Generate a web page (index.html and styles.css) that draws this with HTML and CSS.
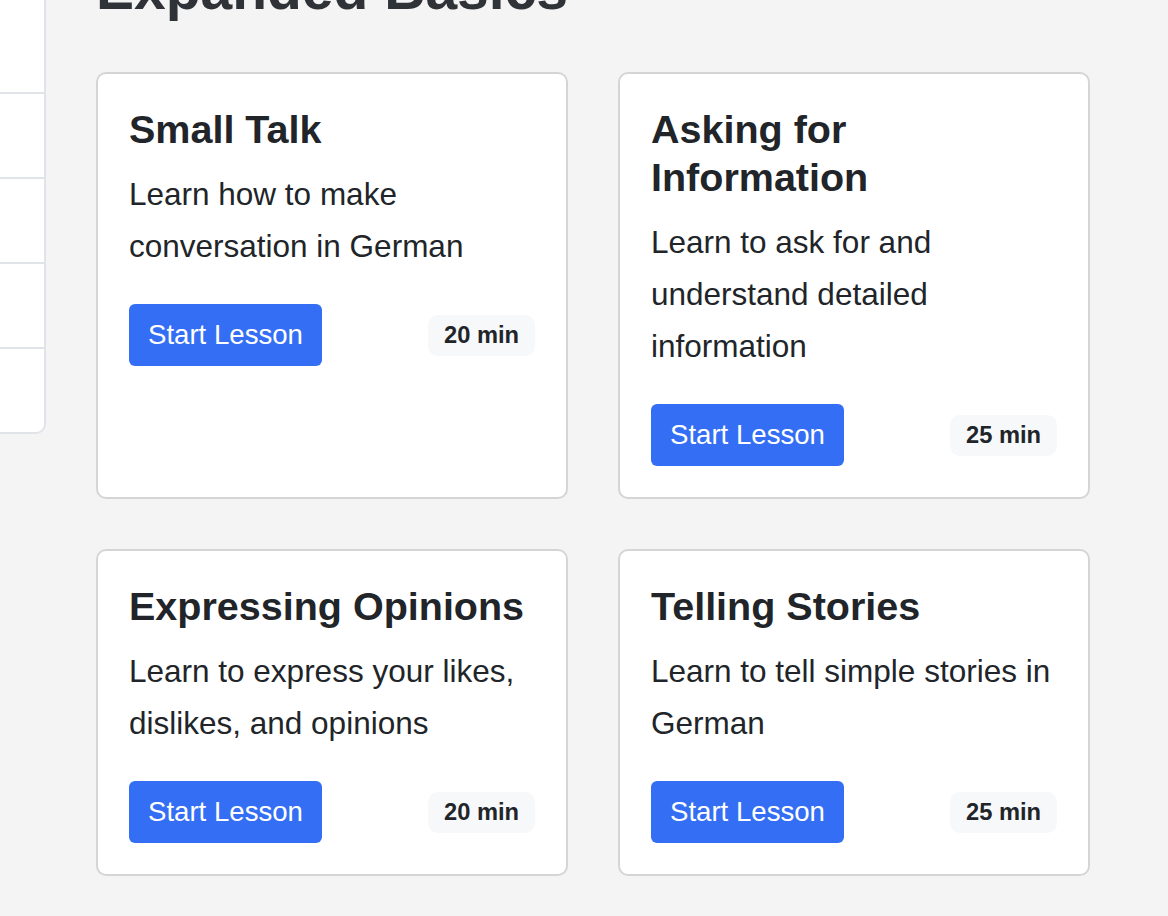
FILE: index.html
```html
<!DOCTYPE html>
<html lang="en">
<head>
<meta charset="utf-8">
<title>Expanded Basics</title>
<link rel="stylesheet" href="styles.css">
</head>
<body>
<div class="layout">
  <aside class="sidebar">
    <div class="side-row side-row-first"></div>
    <div class="side-row"></div>
    <div class="side-row"></div>
    <div class="side-row"></div>
    <div class="side-row side-row-last"></div>
  </aside>
  <main class="main">
    <h1 class="section-title">Expanded Basics</h1>
    <div class="grid">
      <div class="card">
        <h2 class="card-title">Small Talk</h2>
        <p class="card-desc">Learn how to make conversation in German</p>
        <div class="card-footer">
          <button class="btn">Start Lesson</button>
          <span class="badge">20 min</span>
        </div>
      </div>
      <div class="card">
        <h2 class="card-title">Asking for Information</h2>
        <p class="card-desc">Learn to ask for and understand detailed information</p>
        <div class="card-footer">
          <button class="btn">Start Lesson</button>
          <span class="badge">25 min</span>
        </div>
      </div>
      <div class="card">
        <h2 class="card-title">Expressing Opinions</h2>
        <p class="card-desc">Learn to express your likes, dislikes, and opinions</p>
        <div class="card-footer">
          <button class="btn">Start Lesson</button>
          <span class="badge">20 min</span>
        </div>
      </div>
      <div class="card">
        <h2 class="card-title">Telling Stories</h2>
        <p class="card-desc">Learn to tell simple stories in German</p>
        <div class="card-footer">
          <button class="btn">Start Lesson</button>
          <span class="badge">25 min</span>
        </div>
      </div>
    </div>
  </main>
</div>
</body>
</html>
```

FILE: styles.css
```css
html, body {
  margin: 0;
  padding: 0;
}

body {
  background: #f4f4f4;
  font-family: "Liberation Sans", Arial, Helvetica, sans-serif;
  color: #212529;
  overflow: hidden;
  height: 916px;
}

.layout {
  display: flex;
  align-items: flex-start;
  margin-top: -45px;
}

.sidebar {
  width: 44px;
  flex: 0 0 44px;
  background: #ffffff;
  border-right: 2px solid #e0e4e8;
  border-bottom: 2px solid #e0e4e8;
  border-bottom-right-radius: 10px;
}

.side-row {
  height: 83px;
  border-bottom: 2px solid #e0e4e8;
}

.side-row-first {
  height: 137px;
}

.side-row-last {
  height: 83px;
  border-bottom: none;
}

.main {
  flex: 1;
  padding: 0 78px 0 50px;
}

.section-title {
  margin: 0 0 49px;
  font-size: 57px;
  line-height: 1.2;
  font-weight: 700;
  color: #2f3337;
}

.grid {
  display: grid;
  grid-template-columns: 472px 472px;
  gap: 50px;
}

.card {
  background: #ffffff;
  border: 2px solid #d5d5d5;
  border-radius: 10px;
  padding: 31px 31px 31px;
}

.card-title {
  margin: 0 0 15px;
  font-size: 39.5px;
  line-height: 48px;
  font-weight: 700;
  color: #212529;
}

.card-desc {
  margin: 0 0 32px;
  font-size: 31.5px;
  line-height: 52px;
  color: #212529;
}

.card-footer {
  display: flex;
  align-items: center;
  justify-content: space-between;
}

.btn {
  font-family: "Liberation Sans", Arial, Helvetica, sans-serif;
  font-size: 27.6px;
  line-height: 32px;
  padding: 15px 19px;
  background: #346ef4;
  color: #ffffff;
  border: none;
  border-radius: 6px;
}

.badge {
  font-size: 23.7px;
  line-height: 27px;
  font-weight: 700;
  padding: 7px 16px;
  background: #f7f8fa;
  border-radius: 10px;
  color: #212529;
}
```
